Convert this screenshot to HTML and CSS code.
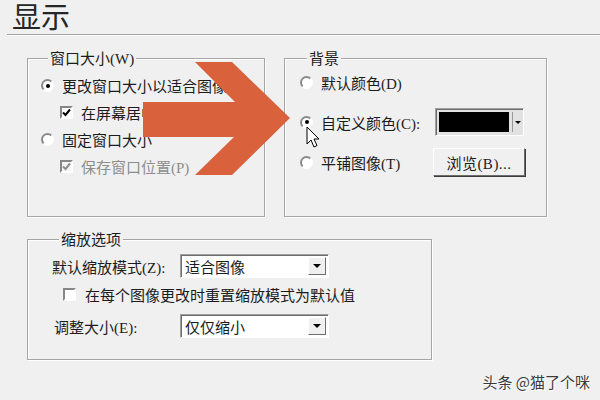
FILE: index.html
```html
<!DOCTYPE html>
<html lang="zh-CN">
<head>
    <meta charset="UTF-8">
    <title>显示</title>
    <link rel="stylesheet" href="styles.css">
</head>
<body>
    <div class="title-bar">
        <h1 class="title">显示</h1>
    </div>

    <div class="group-row">
        <div class="group group-size">
            <span class="group-title">窗口大小(W)</span>
            <div class="opt first"><span class="radio checked"></span>更改窗口大小以适合图像</div>
            <div class="opt sub">
                <span class="check"><svg viewBox="0 0 9 9"><polyline points="1,4.5 3.5,7 8,1.5"/></svg></span>在屏幕居中
            </div>
            <div class="opt"><span class="radio"></span>固定窗口大小</div>
            <div class="opt sub disabled">
                <span class="check"><svg viewBox="0 0 9 9"><polyline points="1,4.5 3.5,7 8,1.5"/></svg></span>保存窗口位置(P)
            </div>
        </div>

        <div class="group group-bg">
            <span class="group-title">背景</span>
            <div class="bg-grid">
                <div class="opt"><span class="radio"></span>默认颜色(D)</div>
                <div></div>
                <div class="opt"><span class="radio checked"></span>自定义颜色(C):</div>
                <div class="color-combo">
                    <span class="swatch"></span>
                    <span class="mini-btn"><span class="tri small"></span></span>
                </div>
                <div class="opt"><span class="radio"></span>平铺图像(T)</div>
                <button class="btn">浏览(B)...</button>
            </div>
        </div>
    </div>

    <div class="group group-zoom">
        <span class="group-title">缩放选项</span>
        <div class="zoom-row row-mode">
            <span class="zoom-label">默认缩放模式(Z):</span>
            <div class="combo"><span class="combo-text">适合图像</span><span class="drop-btn"><span class="tri"></span></span></div>
        </div>
        <div class="opt zoom-check">
            <span class="check empty"></span>在每个图像更改时重置缩放模式为默认值
        </div>
        <div class="zoom-row row-resize">
            <span class="zoom-label shift">调整大小(E):</span>
            <div class="combo"><span class="combo-text">仅仅缩小</span><span class="drop-btn"><span class="tri"></span></span></div>
        </div>
    </div>

    <!-- tutorial overlay: big arrow + mouse pointer -->
    <svg class="overlay" viewBox="0 0 600 400" width="600" height="400">
        <polygon class="arrow" points="143,102 235,102 195,62 232,62 290,118 232,175 195,175 234,137 143,137"/>
        <polygon class="pointer" points="307,127 307,144 311,140 314,147 317,145.5 314,139 319,139"/>
    </svg>

    <div class="watermark">头条 @猫了个咪</div>
</body>
</html>
```

FILE: styles.css
```css
body {
    margin: 0;
    width: 600px;
    height: 400px;
    overflow: hidden;
    position: relative;
    background-color: #f0f0f0;
    font-family: "Liberation Serif", "Noto Sans CJK SC", serif;
    font-size: 15px;
    color: #1c1c1c;
}

.title-bar {
    margin-left: 7px;
    height: 34px;
    border-bottom: 1px solid #a3a3a3;
    box-shadow: 0 1px 0 #fff;
}

.title {
    margin: 0;
    padding-left: 5px;
    font-family: "Noto Sans CJK SC", sans-serif;
    font-size: 29px;
    font-weight: 400;
    line-height: 30px;
    color: #262626;
}

/* group boxes */
.group-row {
    display: flex;
    gap: 19px;
    margin-top: 23px;
    padding-left: 27px;
}

.group {
    box-sizing: border-box;
    display: flex;
    flex-direction: column;
    border: 1px solid #a5a5a5;
    box-shadow: inset 1px 1px 0 #fff, 1px 1px 0 #fff;
}

.group-title {
    align-self: flex-start;
    margin: -9px 0 0 7px;
    padding: 0 2px;
    line-height: 18px;
    height: 18px;
    background-color: #f0f0f0;
    white-space: nowrap;
}

.group-size {
    width: 238px;
    height: 159px;
    padding-left: 13px;
}

.group-bg {
    width: 263px;
    height: 159px;
    padding-left: 15px;
}

.group-zoom {
    width: 405px;
    height: 121px;
    margin: 22px 0 0 27px;
    padding-left: 24px;
}

/* option rows */
.opt {
    display: flex;
    align-items: center;
    height: 27px;
    white-space: nowrap;
}

.opt.first {
    margin-top: 4px;
}

.opt.sub {
    padding-left: 19px;
}

.opt.disabled {
    color: #8d8d8d;
}

.radio {
    flex: none;
    box-sizing: border-box;
    width: 13px;
    height: 13px;
    margin-right: 8px;
    border-radius: 50%;
    border: 2px solid;
    border-color: #8a8a8a #fff #fff #8a8a8a;
    background-color: #fff;
    display: flex;
    align-items: center;
    justify-content: center;
}

.radio.checked::after {
    content: "";
    width: 4px;
    height: 4px;
    border-radius: 50%;
    background-color: #000;
}

.check {
    flex: none;
    box-sizing: border-box;
    width: 13px;
    height: 13px;
    margin-right: 8px;
    border: 2px solid;
    border-color: #878787 #fff #fff #878787;
    background-color: #fff;
    display: flex;
    align-items: center;
    justify-content: center;
}

.check svg {
    width: 9px;
    height: 9px;
}

.check polyline {
    fill: none;
    stroke: #000;
    stroke-width: 2;
}

.disabled .check {
    background-color: #f5f5f5;
}

.disabled .check polyline {
    stroke: #8d8d8d;
}

/* background group */
.bg-grid {
    display: grid;
    grid-template-columns: 133px auto;
    grid-auto-rows: 28px;
    row-gap: 12px;
    align-items: center;
}

.bg-grid .opt {
    height: 28px;
}

.color-combo {
    box-sizing: border-box;
    width: 89px;
    height: 28px;
    margin-left: 2px;
    padding: 3px 1px 3px 3px;
    display: flex;
    border: 1px solid;
    border-color: #a0a0a0 #fff #fff #a0a0a0;
    box-shadow: inset 1px 1px 0 #6d6d6d;
    background-color: #e2e2e2;
}

.swatch {
    width: 70px;
    background-color: #000;
}

.mini-btn {
    flex: 1;
    margin-left: 3px;
    border-left: 1px solid #999;
    display: flex;
    align-items: center;
    justify-content: center;
}

.btn {
    box-sizing: border-box;
    width: 92px;
    height: 28px;
    padding: 0;
    font: inherit;
    color: inherit;
    letter-spacing: 0.5px;
    background-color: #f0f0f0;
    border: 1px solid;
    border-color: #fff #6d6d6d #6d6d6d #fff;
    box-shadow: 1px 1px 0 #3c3c3c;
}

/* zoom group */
.zoom-row {
    display: flex;
    align-items: center;
    height: 24px;
}

.row-mode {
    margin-top: 5px;
}

.row-resize {
    margin-top: 8px;
}

.zoom-label {
    width: 128px;
    white-space: nowrap;
}

.zoom-label.shift {
    padding-left: 2px;
    width: 126px;
}

.zoom-check {
    height: 24px;
    margin-top: 4px;
    padding-left: 11px;
}

.zoom-check .check {
    margin-right: 9px;
}

.combo {
    box-sizing: border-box;
    width: 149px;
    height: 24px;
    display: flex;
    align-items: center;
    border: 1px solid;
    border-color: #a0a0a0 #fff #fff #a0a0a0;
    box-shadow: inset 1px 1px 0 #6d6d6d;
    background-color: #fff;
    padding: 2px 2px 2px 4px;
}

.combo-text {
    flex: 1;
    white-space: nowrap;
}

.drop-btn {
    box-sizing: border-box;
    width: 18px;
    height: 18px;
    display: flex;
    align-items: center;
    justify-content: center;
    background-color: #f0f0f0;
    border: 1px solid;
    border-color: #fff #6d6d6d #6d6d6d #fff;
}

.tri {
    width: 0;
    height: 0;
    border-left: 4px solid transparent;
    border-right: 4px solid transparent;
    border-top: 4px solid #000;
}

.tri.small {
    border-left-width: 3px;
    border-right-width: 3px;
    border-top-width: 3px;
}

/* overlays */
.overlay {
    position: absolute;
    left: 0;
    top: 0;
    pointer-events: none;
}

.arrow {
    fill: #d9613c;
}

.pointer {
    fill: #fff;
    stroke: #000;
    stroke-width: 1;
    stroke-linejoin: round;
}

.watermark {
    position: absolute;
    right: 10px;
    bottom: 9px;
    font-family: "Noto Sans CJK SC", sans-serif;
    font-size: 15px;
    line-height: 18px;
    color: #3a3a3a;
    text-shadow: 0 0 1px #fff, 1px 1px 0 #fff;
}
```
